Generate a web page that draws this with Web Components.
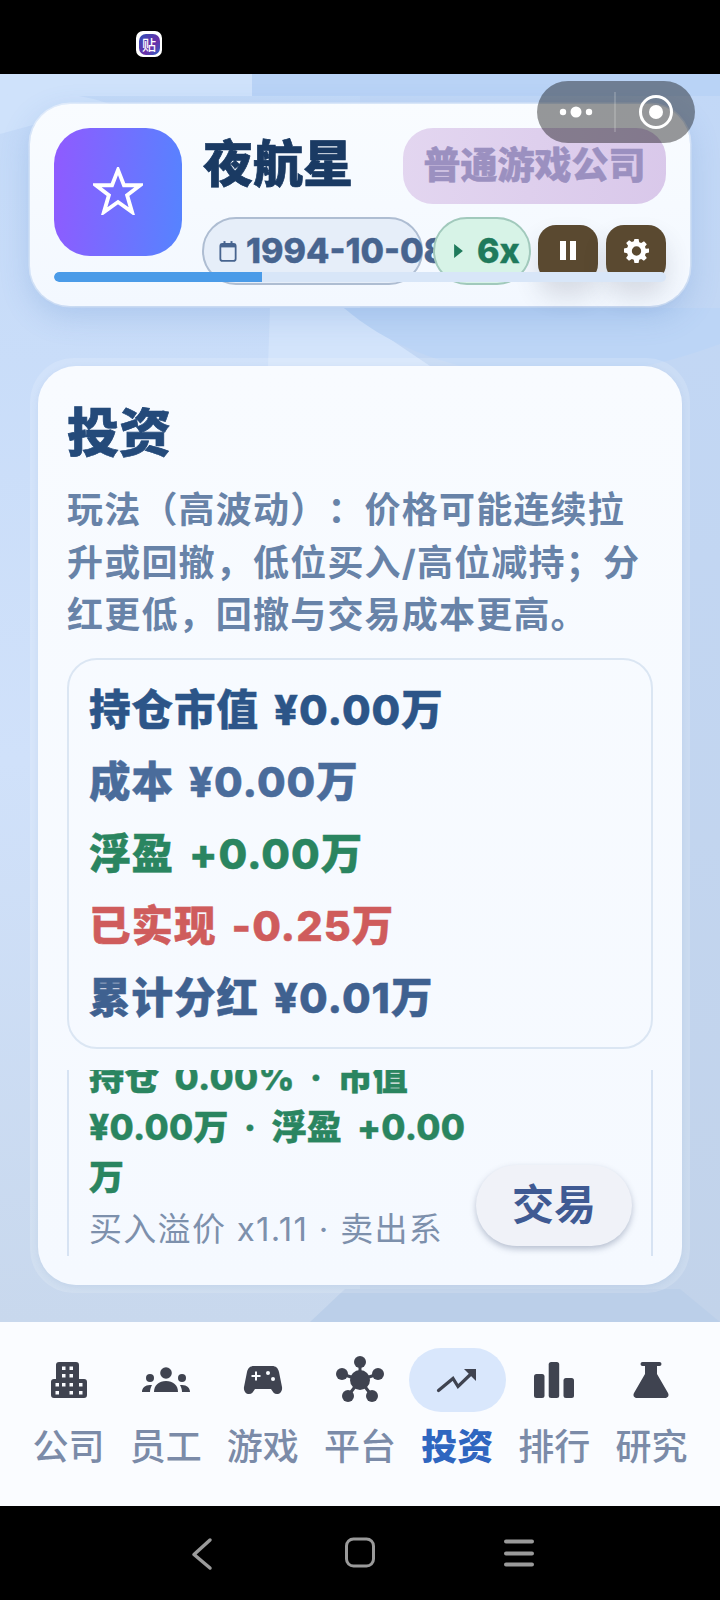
<!DOCTYPE html>
<html lang="zh"><head><meta charset="utf-8"><title>夜航星</title>
<style>
html,body{margin:0;padding:0;background:#000}
body{font-family:Inter,"Noto Sans CJK SC","Noto Sans",sans-serif;text-spacing-trim:space-all}
</style></head><body>
<x-app>
  <x-status slot="status"></x-status>
  <x-capsule slot="capsule"></x-capsule>
  <x-header-card slot="main" name="夜航星" tag="普通游戏公司" date="1994-10-08" speed="6x"></x-header-card>
  <x-panel slot="main" heading="投资" desc="玩法（高波动）：价格可能连续拉升或回撤，低位买入/高位减持；分红更低，回撤与交易成本更高。">
    <x-stats>
      <x-stat tone="a">持仓市值 ¥0.00万</x-stat>
      <x-stat tone="b">成本 ¥0.00万</x-stat>
      <x-stat tone="g">浮盈 +0.00万</x-stat>
      <x-stat tone="r">已实现 -0.25万</x-stat>
      <x-stat tone="c">累计分红 ¥0.01万</x-stat>
    </x-stats>
    <x-item sub="买入溢价 x1.11 · 卖出系" action="交易">持仓 0.00% · 市值 ¥0.00万 · 浮盈 +0.00万</x-item>
  </x-panel>
  <x-tabbar slot="nav"></x-tabbar>
  <x-sysnav slot="sys"></x-sysnav>
</x-app>
<script>
function def(name,html,init){
  customElements.define(name,class extends HTMLElement{
    constructor(){super();this.attachShadow({mode:'open'})}
    connectedCallback(){this.shadowRoot.innerHTML=typeof html==='function'?html(this):html;if(init)init(this)}
  });
}
const A=(e,n)=>e.getAttribute(n)||'';

def('x-app',`<style>
:host{display:flex;flex-direction:column;width:720px;height:1600px;position:relative;overflow:hidden;background:#000}
.content{height:1248px;display:grid;flex:none}
.bg,.fg{grid-area:1/1}
.bg{width:720px;height:1248px;display:block}
.fg{display:flex;flex-direction:column;padding:30px 30px 29px;box-sizing:border-box;gap:52px;min-height:0}
.ov{position:absolute;top:81px;left:537px}
</style>
<slot name="status"></slot>
<div class="content">
<svg class="bg" viewBox="0 0 720 1248" aria-hidden="true">
<defs><linearGradient id="b" x1="0" y1="0" x2="0" y2="1"><stop offset="0" stop-color="#c4daf8"/><stop offset=".55" stop-color="#d0e1fa"/><stop offset="1" stop-color="#c8d8ed"/></linearGradient>
<linearGradient id="r" x1="0" y1="0" x2="0" y2="1"><stop offset="0" stop-color="#c2d8f7"/><stop offset="1" stop-color="#c2d3ea"/></linearGradient></defs>
<rect width="720" height="1248" fill="url(#b)"/>
<rect x="360" width="360" height="1248" fill="url(#r)"/>
<rect x="0" y="0" width="252" height="22" fill="#cfe2fb"/>
<rect x="252" y="0" width="468" height="22" fill="#b9d3f6"/>
<path d="M0 22Q60 12 110 30L0 60Z" fill="#cfe2fb"/>
<path d="M270 234H344L430 292H268Z" fill="#d3e4fb"/>
<path d="M344 234C420 300 560 330 720 270V234Z" fill="#bcd5f6"/>
<path d="M310 1248L345 1215H680L720 1248Z" fill="#bbcfe9"/>
</svg>
<div class="fg"><slot name="main"></slot></div>
</div>
<slot name="nav"></slot><slot name="sys"></slot>
<div class="ov"><slot name="capsule"></slot></div>`);

def('x-status',`<style>
:host{display:flex;align-items:center;height:74px;background:#000;flex:none;padding-left:136px;box-sizing:border-box}
.i{width:26px;height:26px;margin-top:14px;border-radius:7px;background:#fff;display:flex;align-items:center;justify-content:center}
.j{width:21px;height:21px;border-radius:7px;background:linear-gradient(135deg,#2d4fb8,#6b2fa8 60%,#2a66c8);display:flex;align-items:center;justify-content:center;color:#fff;font:500 14px/1 "Noto Sans CJK SC",sans-serif}
</style><div class="i"><div class="j">贴</div></div>`);

def('x-capsule',`<style>
:host{display:flex;align-items:center;width:158px;height:62px;border-radius:31px;background:rgba(0,0,0,.4)}
svg{display:block}
</style><svg width="158" height="62" viewBox="0 0 158 62" aria-hidden="true">
<circle cx="26" cy="31" r="3.2" fill="#fff"/><circle cx="39" cy="31" r="5.500" fill="#fff"/><circle cx="52" cy="31" r="3.2" fill="#fff"/>
<rect x="77.5" y="11" width="1" height="40" fill="rgba(255,255,255,.35)"/>
<circle cx="119" cy="31" r="15.5" fill="none" stroke="#fff" stroke-width="3"/><circle cx="119" cy="31" r="7" fill="#fff"/></svg>`);

def('x-header-card',e=>`<style>
:host{display:flex;flex-direction:column;height:202px;box-sizing:border-box;padding:24px;background:linear-gradient(180deg,#f9fcff,#f3f8ff);border-radius:40px;box-shadow:0 10px 30px rgba(80,130,200,.24),0 0 0 1.500px rgba(255,255,255,.5);flex:none}
.top{display:flex;gap:22px}
.logo{width:128px;height:128px;flex:none;border-radius:36px;background:linear-gradient(95deg,#905aff,#5584ff);display:flex;align-items:center;justify-content:center}
.logo svg{display:block;margin:0 0 2px 0}
.r{flex:1;min-width:0;display:flex;flex-direction:column;gap:13px}
.r1{display:flex;justify-content:space-between;align-items:flex-start;height:76px}
h1{margin:-2px 0 0 -1px;font:900 50px/76px Inter,"Noto Sans CJK SC",sans-serif;color:#1a3a63;-webkit-text-stroke:.7px #1a3a63}
.tag{width:263px;height:76px;box-sizing:border-box;border-radius:30px;background:linear-gradient(100deg,#e3d6f0,#d9c8ea);color:#9b90c0;font:800 37px/76px Inter,"Noto Sans CJK SC",sans-serif;text-align:center;-webkit-text-stroke:.5px #9b90c0}
.r2{display:flex;align-items:flex-start;margin-left:-2px}
.pill{height:68px;box-sizing:border-box;border-radius:34px;border:2px solid #aebdd2;display:flex;align-items:center;white-space:nowrap;font:800 34px/1 Inter,"Noto Sans CJK SC",sans-serif;flex:none}
.date{width:221px;background:#e6eef9;color:#47648f;padding-left:15px;gap:9px;margin-right:10px;-webkit-text-stroke:.4px #47648f}
.speed{width:98px;background:#d7f3e7;border-color:#a1c9bc;color:#1f7a5c;padding-left:19px;gap:14px;margin-right:7px;position:relative;-webkit-text-stroke:.4px #1f7a5c}
.btn{width:60px;height:57px;margin-top:8px;border-radius:18px;background:#5a4930;display:flex;align-items:center;justify-content:center;flex:none;box-shadow:0 14px 24px rgba(60,70,90,.16)}
.btn+.btn{margin-left:8px}
.btn svg{display:block;margin-top:-6px}
.track{height:10px;margin-top:-13px;border-radius:5px;background:#d8e6f8;position:relative;flex:none;overflow:hidden}
.fill{height:100%;width:208px;background:#4a9be8;border-radius:5px 0 0 5px}
</style>
<div class="top">
<div class="logo"><svg width="50" height="48" viewBox="0 0 52 50" aria-hidden="true"><path d="M26 3L32.2 19H49L35.5 29.3L40.7 47L26 36.500L11.3 47L16.5 29.3L3 19H19.8Z" fill="none" stroke="#fff" stroke-width="4"/></svg></div>
<div class="r">
<div class="r1"><h1>${A(e,'name')}</h1><div class="tag">${A(e,'tag')}</div></div>
<div class="r2">
<div class="pill date"><svg width="18" height="24" viewBox="0 0 20 26" aria-hidden="true" style="flex:none"><rect x="1.500" y="5" width="17" height="19" rx="2.500" fill="none" stroke="#47648f" stroke-width="2"/><rect x="1.500" y="5" width="17" height="4" fill="#47648f"/><rect x="5" y="2" width="2.200" height="3.500" fill="#47648f"/><rect x="12.800" y="2" width="2.200" height="3.500" fill="#47648f"/></svg><span>${A(e,'date')}</span></div>
<div class="pill speed"><svg width="9" height="14" viewBox="0 0 10 16" aria-hidden="true" style="flex:none"><path d="M0 0L10 8L0 16Z" fill="#1f7a5c"/></svg><span>${A(e,'speed')}</span></div>
<div class="btn"><svg width="18" height="19" viewBox="0 0 18 22" preserveAspectRatio="none" aria-hidden="true"><rect x="1" width="6" height="22" fill="#fff"/><rect x="11" width="6" height="22" fill="#fff"/></svg></div>
<div class="btn"><svg width="25" height="25" viewBox="0 0 24 24" aria-hidden="true"><path fill="#fff" fill-rule="evenodd" d="M10 1h4l.6 3.1 1.9.8 2.7-1.8 2.7 2.8-1.8 2.6.8 1.9L24 10v4l-3.1.6-.8 1.900 1.800 2.700-2.800 2.700-2.600-1.800-1.900.8L14 24h-4l-.6-3.1-1.900-.8-2.700 1.800L2 19.100l1.800-2.600-.8-1.900L0 14v-4l3.100-.6.8-1.900L2.100 4.900 4.900 2.100l2.600 1.800 1.900-.8zM12 8a4.500 4.500 0 1 0 0 9 4.500 4.500 0 0 0 0-9z"/></svg></div>
</div></div></div>
<div class="track"><div class="fill"></div></div>`);

def('x-panel',e=>`<style>
:host{display:block;flex:1;min-height:0;box-sizing:border-box;padding:8px;border-radius:44px;background:rgba(255,255,255,.16)}
.c{height:100%;box-sizing:border-box;background:linear-gradient(180deg,#f8fbff,#f5f9ff);border-radius:38px;padding:30px 29px 29px;display:flex;flex-direction:column;box-shadow:0 2px 6px rgba(90,130,190,.12)}
h2{margin:0 0 12px;padding-left:0;font:900 52px/76px Inter,"Noto Sans CJK SC",sans-serif;color:#244a7a;-webkit-text-stroke:.7px #244a7a;flex:none}
p{margin:0 0 16px;padding-left:0;font:700 36px/52.5px Inter,"Noto Sans CJK SC",sans-serif;letter-spacing:1.200px;color:#6883a8;flex:none}
::slotted(x-stats){margin-bottom:21px}
</style><div class="c"><h2>${A(e,'heading')}</h2><p>${A(e,'desc')}</p><slot></slot></div>`);

def('x-stats',`<style>
:host{display:flex;flex-direction:column;box-sizing:border-box;height:391px;flex:none;border:2px solid #dbe6f3;border-radius:30px;padding:14px 20px}
</style><slot></slot>`);

def('x-stat',e=>{const c={a:'#2c5588',b:'#4a6c9b',g:'#2a8560',r:'#cf5c5c',c:'#3f6190'}[A(e,'tone')];
return `<style>:host{display:block;font:800 41.500px/72px Inter,"Noto Sans CJK SC",sans-serif;letter-spacing:1px;word-spacing:5px;color:${c};-webkit-text-stroke:.5px ${c};white-space:nowrap}</style><slot></slot>`});

def('x-item',e=>`<style>
:host{display:block;height:186px;flex:none;overflow:hidden}
.i{height:204px;margin-top:-18px;box-sizing:border-box;border:solid #d7e3f3;border-width:0 2px;padding-left:20px;display:flex;justify-content:space-between;align-items:flex-start}
.t{width:378px;flex:none}
.m{font:800 35px/50px Inter,"Noto Sans CJK SC",sans-serif;letter-spacing:.3px;word-spacing:7px;color:#2a8560;-webkit-text-stroke:.4px #2a8560;overflow-wrap:anywhere}
.s{margin-top:2px;font:400 33px/50px Inter,"Noto Sans CJK SC",sans-serif;letter-spacing:1.300px;color:#7d90ac;white-space:nowrap}
button{width:156px;height:81px;margin:113px 19px 0 0;flex:none;border:0;border-radius:41px;background:#f0f2f8;color:#3f5a93;font:600 42px/1 Inter,"Noto Sans CJK SC",sans-serif;box-shadow:0 3px 6px rgba(70,85,120,.35)}
</style><div class="i"><div class="t"><div class="m"><slot></slot></div><div class="s">${A(e,'sub')}</div></div><button>${A(e,'action')}</button></div>`);

const ICONS={
b:`<svg width="36" height="36" viewBox="0 0 36 36"><path fill="#3f4350" d="M8 0h17a3 3 0 0 1 3 3v14h5a3 3 0 0 1 3 3v13a3 3 0 0 1-3 3H3a3 3 0 0 1-3-3V20a3 3 0 0 1 3-3h2V3a3 3 0 0 1 3-3z"/><g fill="#fafcff"><rect x="11" y="4.500" width="3.500" height="3.500"/><rect x="18.500" y="4.500" width="3.500" height="3.500"/><rect x="11" y="12" width="3.500" height="3.500"/><rect x="18.500" y="12" width="3.500" height="3.500"/><rect x="4.500" y="21" width="3.500" height="3.500"/><rect x="11" y="21" width="3.500" height="3.500"/><rect x="18.500" y="21" width="3.500" height="3.500"/><rect x="28" y="21" width="3.500" height="3.500"/><rect x="4.500" y="29" width="3.500" height="3.500"/><rect x="18.500" y="29" width="3.500" height="3.500"/><rect x="28" y="29" width="3.500" height="3.500"/></g></svg>`,
u:`<svg width="48" height="36" viewBox="0 0 48 36"><g fill="#3f4350"><circle cx="24" cy="11" r="5.800"/><circle cx="8" cy="16" r="4"/><circle cx="40" cy="16" r="4"/><path d="M12 30c0-7 5-11 12-11s12 4 12 11z"/><path d="M0 30c0-4 3-7 8-7h2c-1 2-2 4-2 7zM48 30c0-4-3-7-8-7h-2c1 2 2 4 2 7z"/></g></svg>`,
g:`<svg width="38" height="36" viewBox="0 0 38 36"><path fill="#3f4350" d="M10 4h18c4 0 6 2 7 6l3 15c.6 4-2 7-5 7-3 0-4-2-6-5H11c-2 3-3 5-6 5-3 0-5.600-3-5-7l3-15c1-4 3-6 7-6z"/><path fill="none" stroke="#fafcff" stroke-width="2" d="M12 9.500v9M7.500 14h9"/><circle cx="24" cy="11" r="2" fill="#fafcff"/><circle cx="29" cy="17" r="2" fill="#fafcff"/></svg>`,
n:`<svg width="48" height="48" viewBox="0 0 48 48"><g stroke="#3f4350" stroke-width="3"><path d="M24 24L6 18M24 24L12 40M24 24V6M24 24L42 18M24 24L36 40"/></g><g fill="#3f4350"><circle cx="24" cy="24" r="10"/><circle cx="6" cy="18" r="6"/><circle cx="12" cy="40" r="6"/><circle cx="24" cy="6" r="6"/><circle cx="42" cy="18" r="6"/><circle cx="36" cy="40" r="6"/></g></svg>`,
c:`<svg width="40" height="24" viewBox="0 0 40 24"><path fill="none" stroke="#3f4350" stroke-width="3.200" stroke-linecap="round" d="M1.500 22.500L16 10.500L21 18.500L36 4"/><path fill="#3f4350" d="M27 1H39V13Z"/></svg>`,
s:`<svg width="40" height="36" viewBox="0 0 40 36"><g fill="#3f4350"><rect y="12" width="10.500" height="24" rx="2.500"/><rect x="14.700" width="10.500" height="36" rx="2.500"/><rect x="29.500" y="16" width="10.500" height="20" rx="2.500"/></g></svg>`,
f:`<svg width="36" height="36" viewBox="0 0 36 36"><path fill="#3f4350" d="M9.500 0h17a2 2 0 0 1 0 4H24v8l11 19c1.300 2.500 0 5-3 5H4c-3 0-4.300-2.500-3-5L12 12V4H9.500a2 2 0 0 1 0-4z"/></svg>`};
const TABS=[['公司','b'],['员工','u'],['游戏','g'],['平台','n'],['投资','c',1],['排行','s'],['研究','f']];
def('x-tabbar',`<style>
:host{display:grid;grid-template-columns:repeat(7,1fr);height:184px;box-sizing:border-box;padding:26px 20px 0;background:#fafcff;flex:none}
</style>`+TABS.map(t=>`<x-tab label="${t[0]}" icon="${t[1]}"${t[2]?' active':''}></x-tab>`).join(''));
def('x-tab',e=>{const on=e.hasAttribute('active');return `<style>
:host{display:flex;flex-direction:column;align-items:center}
.p{width:97px;height:64px;border-radius:32px;display:flex;align-items:center;justify-content:center;${on?'background:#d9e7fc':''}}
.p svg{display:block;overflow:visible}
.l{margin-top:9px;font:${on?800:500} 36px/52px Inter,"Noto Sans CJK SC",sans-serif;color:${on?'#2f66c0':'#7b8ba8'};white-space:nowrap}
</style><div class="p">${ICONS[A(e,'icon')]}</div><div class="l">${A(e,'label')}</div>`});

def('x-sysnav',`<style>
:host{display:flex;justify-content:center;align-items:center;height:94px;background:#000;flex:none;gap:0}
svg{display:block}
</style><svg width="720" height="94" viewBox="0 0 720 94" aria-hidden="true">
<path d="M210 34L194 48.500L210 62" fill="none" stroke="#9a9a9a" stroke-width="3.500" stroke-linecap="round" stroke-linejoin="round"/>
<rect x="346.500" y="33" width="27" height="27" rx="7" fill="none" stroke="#9a9a9a" stroke-width="3"/>
<path d="M506 35.500H532M506 47.500H532M506 58.500H532" fill="none" stroke="#9a9a9a" stroke-width="4" stroke-linecap="round"/></svg>`);
</script>
</body></html>
